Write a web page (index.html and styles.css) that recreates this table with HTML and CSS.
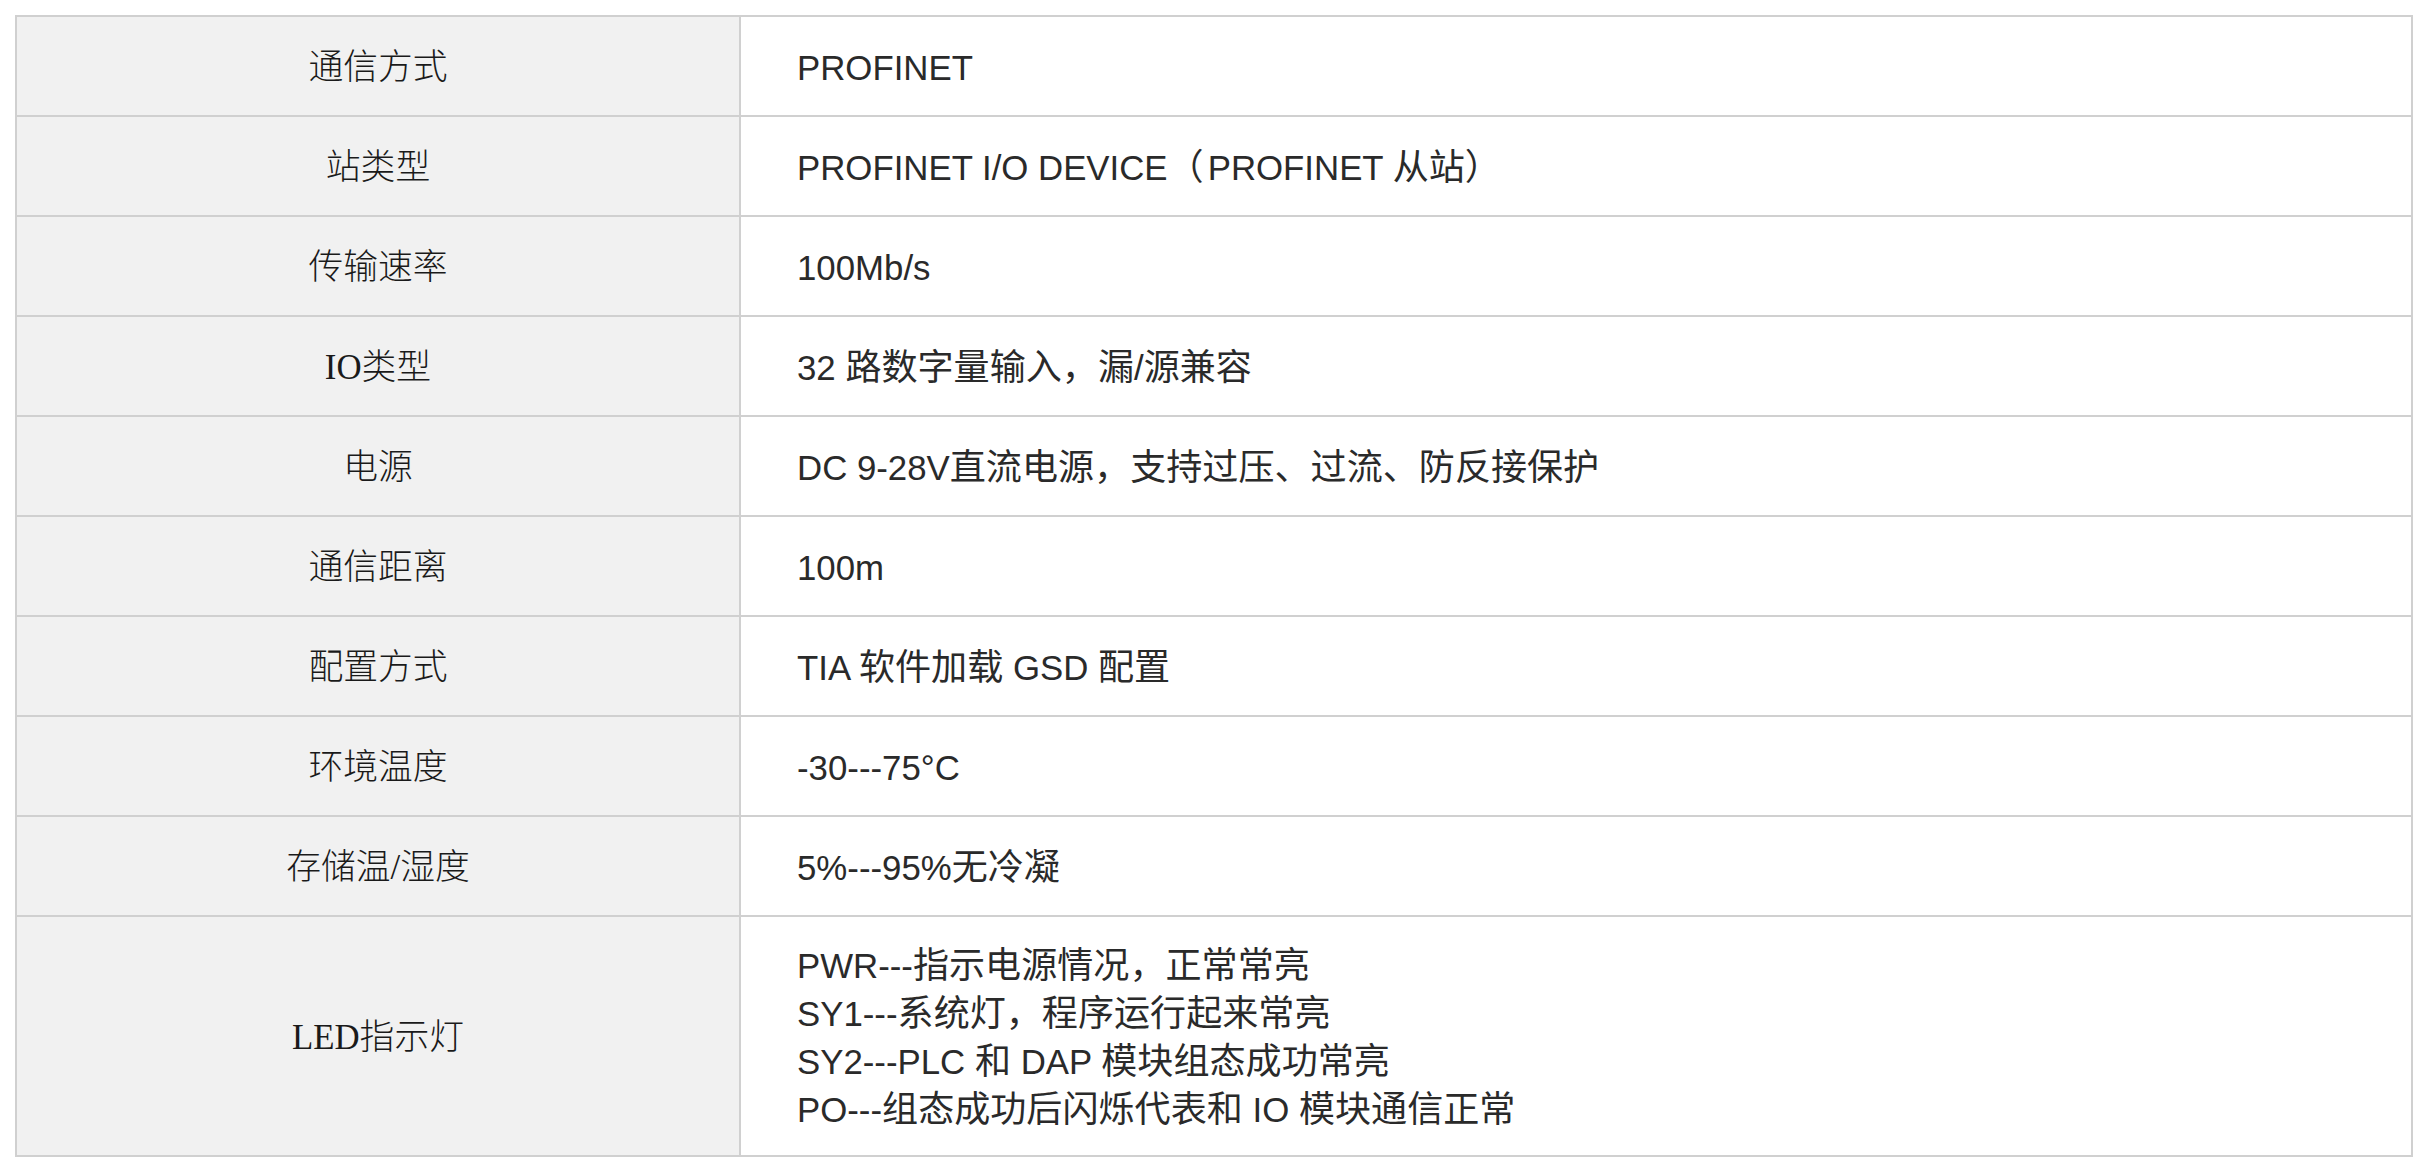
FILE: index.html
```html
<!DOCTYPE html>
<html lang="zh-CN">
<head>
<meta charset="utf-8">
<title>参数</title>
<link rel="stylesheet" href="styles.css">
</head>
<body>
<div class="spec">
  <div class="k">通信方式</div><div class="v"><span>PROFINET</span></div>
  <div class="k">站类型</div><div class="v"><span>PROFINET I/O DEVICE<span class="zh paren">（</span>PROFINET <span class="zh">从站</span><span class="zh paren">）</span></span></div>
  <div class="k">传输速率</div><div class="v"><span>100Mb/s</span></div>
  <div class="k">IO类型</div><div class="v"><span>32 <span class="zh">路数字量输入，漏</span>/<span class="zh">源兼容</span></span></div>
  <div class="k">电源</div><div class="v"><span>DC 9-28V<span class="zh">直流电源，支持过压、过流、防反接保护</span></span></div>
  <div class="k">通信距离</div><div class="v"><span>100m</span></div>
  <div class="k">配置方式</div><div class="v"><span>TIA <span class="zh">软件加载</span> GSD <span class="zh">配置</span></span></div>
  <div class="k">环境温度</div><div class="v"><span>-30---75°C</span></div>
  <div class="k">存储温/湿度</div><div class="v"><span>5%---95%<span class="zh">无冷凝</span></span></div>
  <div class="k">LED指示灯</div>
  <div class="v multi">
    <div class="line">PWR---<span class="zh">指示电源情况，正常常亮</span></div>
    <div class="line">SY1---<span class="zh">系统灯，程序运行起来常亮</span></div>
    <div class="line">SY2---PLC <span class="zh">和</span> DAP <span class="zh">模块组态成功常亮</span></div>
    <div class="line">PO---<span class="zh">组态成功后闪烁代表和</span> IO <span class="zh">模块通信正常</span></div>
  </div>
</div>
</body>
</html>
```

FILE: styles.css
```css
html, body {
  margin: 0;
  padding: 0;
  background: #ffffff;
}

body {
  padding: 15px;
}

.spec {
  display: grid;
  grid-template-columns: 724px 1fr;
  grid-template-rows: repeat(9, 100px) 240px;
  border-top: 2px solid #d0d0d0;
  border-left: 2px solid #d0d0d0;
}

.k, .v {
  box-sizing: border-box;
  border-right: 2px solid #d0d0d0;
  border-bottom: 2px solid #d0d0d0;
  display: flex;
  align-items: center;
  padding-top: 4px;
  font-size: 34.8px;
  line-height: 48px;
}

.k {
  background: #f1f1f1;
  justify-content: center;
  color: #1a1a1a;
  font-family: "Liberation Serif", "Noto Sans CJK SC", serif;
  font-weight: 300;
}

.v {
  background: #ffffff;
  padding-left: 56px;
  color: #2a2a2a;
  font-family: "Liberation Sans", "Noto Sans CJK SC", sans-serif;
}

.zh {
  font-size: 36.1px;
}

.paren {
  letter-spacing: 4px;
}

.v.multi {
  flex-direction: column;
  align-items: flex-start;
  justify-content: center;
}

.line {
  white-space: nowrap;
}
```
